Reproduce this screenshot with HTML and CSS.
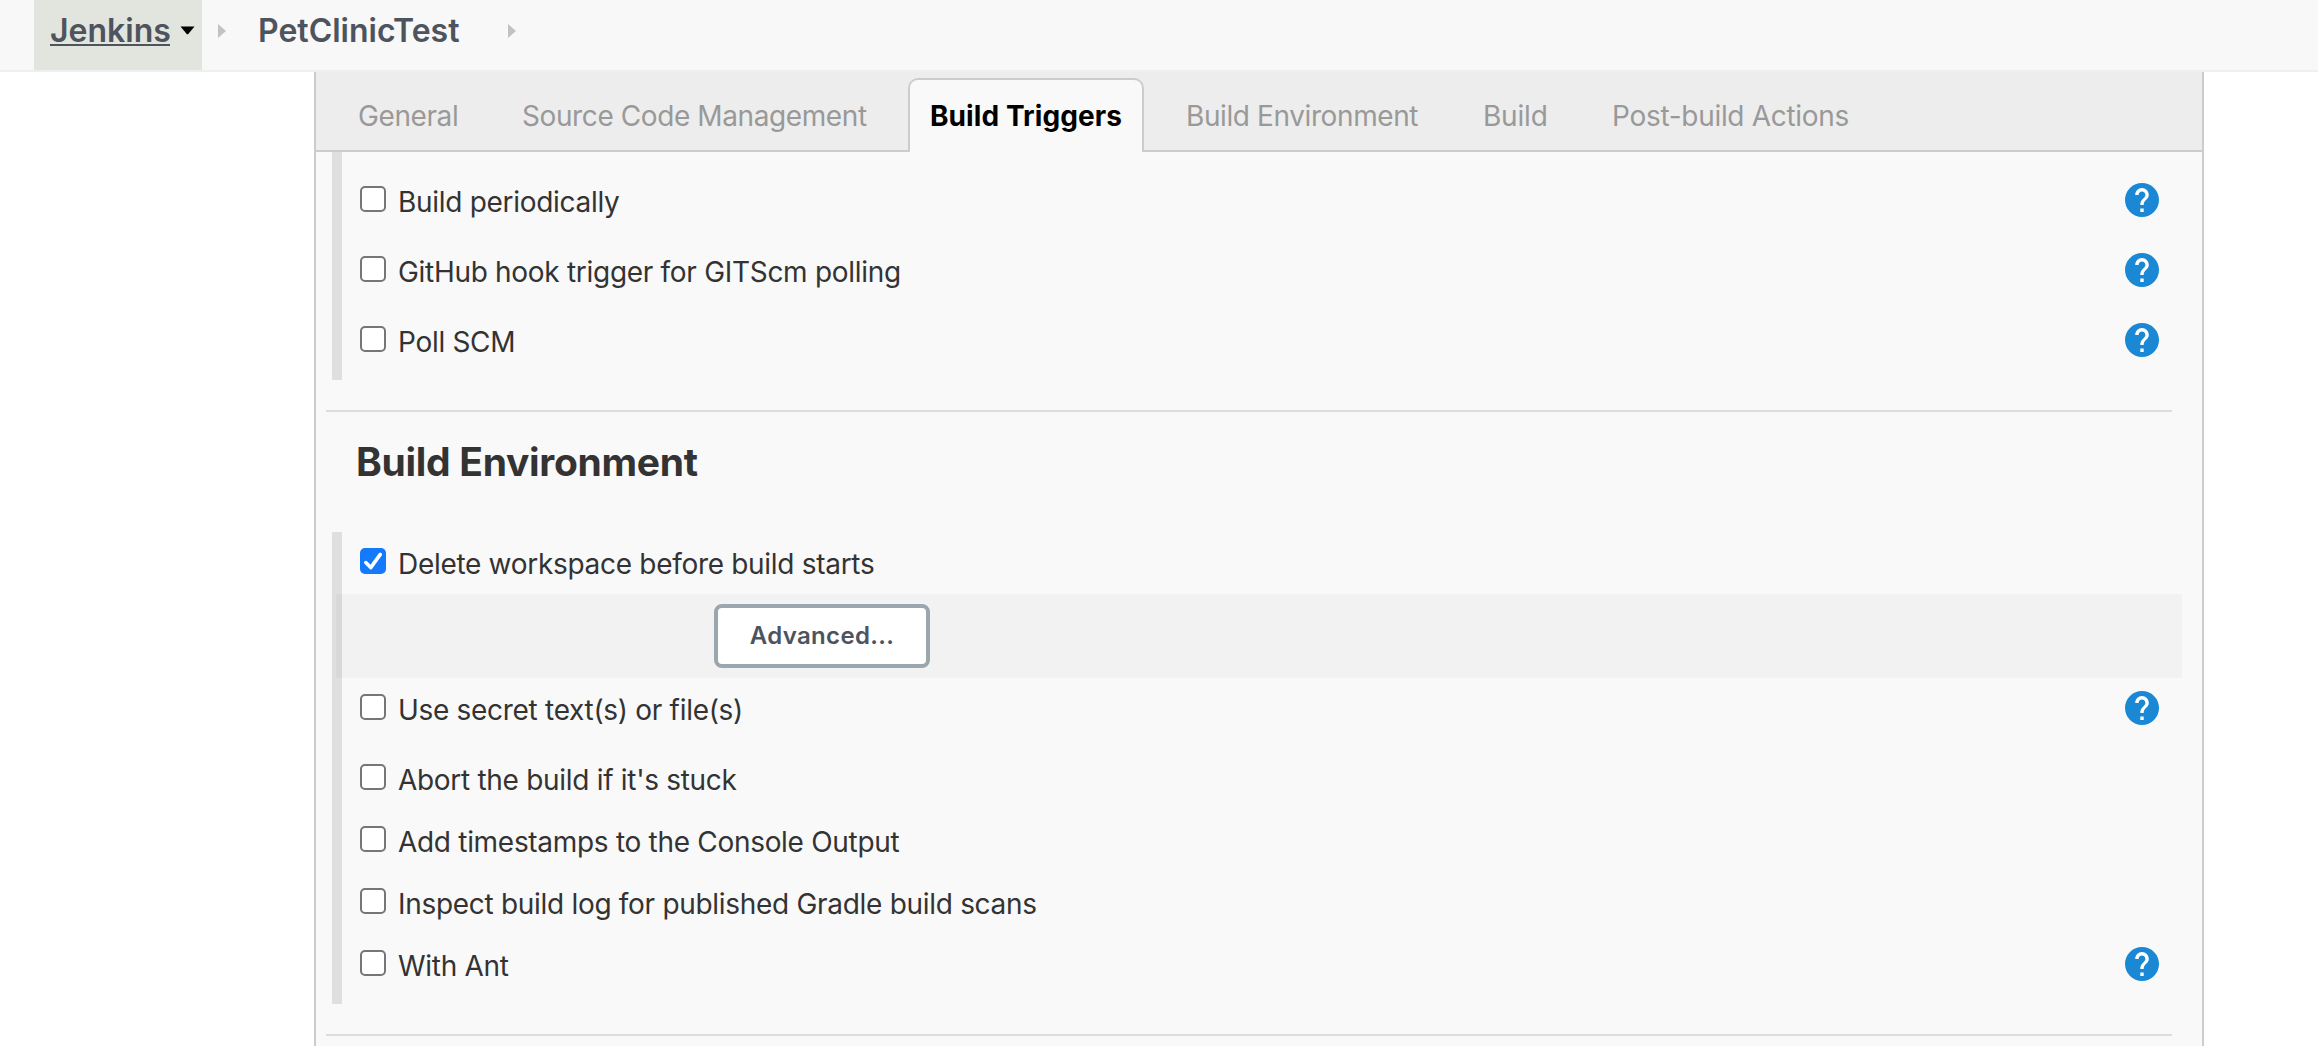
FILE: index.html
```html
<!DOCTYPE html>
<html lang="en">
<head>
<meta charset="utf-8">
<title>PetClinicTest Config [Jenkins]</title>
<link rel="stylesheet" href="styles.css">
</head>
<body>
<svg width="0" height="0" class="defs" aria-hidden="true">
  <symbol id="help" viewBox="2 2 20 20">
    <circle cx="12" cy="12" r="10" fill="#1a88d4"/>
    <path fill="#fff" d="M13 19h-2v-2h2v2zm2.07-7.75l-.9.92C13.45 12.9 13 13.5 13 15h-2v-.5c0-1.1.45-2.1 1.17-2.83l1.24-1.26c.37-.36.59-.86.59-1.41 0-1.1-.9-2-2-2s-2 .9-2 2H8c0-2.21 1.79-4 4-4s4 1.79 4 4c0 .88-.36 1.68-.93 2.25z"/>
  </symbol>
</svg>

<nav class="breadcrumbs">
  <div class="crumb crumb-active">
    <a class="crumb-link" href="#">Jenkins</a>
    <svg class="caret" viewBox="0 0 15 9"><path d="M0.5 0.5h14L8.5 7.8q-1 1.1-2 0z"/></svg>
  </div>
  <svg class="sep" viewBox="0 0 8 14"><path d="M0 0l8 7-8 7z"/></svg>
  <a class="crumb-project" href="#">PetClinicTest</a>
  <svg class="sep" viewBox="0 0 8 14"><path d="M0 0l8 7-8 7z"/></svg>
</nav>

<main class="config">
  <div class="tabs">
    <div class="tab tab-general">General</div>
    <div class="tab tab-scm">Source Code Management</div>
    <div class="tab tab-triggers active">Build Triggers</div>
    <div class="tab tab-env">Build Environment</div>
    <div class="tab tab-build">Build</div>
    <div class="tab tab-post">Post-build Actions</div>
  </div>

  <section class="group group-first">
    <div class="row tall"><input class="check" type="checkbox" id="c1"><label for="c1">Build periodically</label><svg class="help"><use href="#help"/></svg></div>
    <div class="row tall"><input class="check" type="checkbox" id="c2"><label for="c2">GitHub hook trigger for GITScm polling</label><svg class="help"><use href="#help"/></svg></div>
    <div class="row tall"><input class="check" type="checkbox" id="c3"><label for="c3">Poll SCM</label><svg class="help"><use href="#help"/></svg></div>
  </section>

  <div class="rule"></div>
  <h2 class="heading">Build Environment</h2>

  <section class="group">
    <div class="row"><span class="checked"><svg viewBox="0 0 26 26"><path d="M5.8 14.6l4.9 5L20.3 6.4" fill="none" stroke="#fff" stroke-width="3.6" stroke-linecap="round" stroke-linejoin="round"/></svg></span><label>Delete workspace before build starts</label></div>
    <div class="nested"><button class="button" type="button">Advanced...</button></div>
    <div class="row tall"><input class="check" type="checkbox" id="c5"><label for="c5">Use secret text(s) or file(s)</label><svg class="help"><use href="#help"/></svg></div>
    <div class="row"><input class="check" type="checkbox" id="c6"><label for="c6">Abort the build if it's stuck</label></div>
    <div class="row"><input class="check" type="checkbox" id="c7"><label for="c7">Add timestamps to the Console Output</label></div>
    <div class="row"><input class="check" type="checkbox" id="c8"><label for="c8">Inspect build log for published Gradle build scans</label></div>
    <div class="row tall"><input class="check" type="checkbox" id="c9"><label for="c9">With Ant</label><svg class="help"><use href="#help"/></svg></div>
  </section>

  <div class="rule"></div>
</main>
</body>
</html>
```
FILE: styles.css
```css
* { box-sizing: border-box; }

body {
  margin: 0;
  height: 1046px;
  overflow: hidden;
  display: flex;
  flex-direction: column;
  background: #fff;
  color: #333;
  font: 28px/36px Inter, "Liberation Sans", sans-serif;
  letter-spacing: -0.3px;
}

.defs { position: absolute; }

/* breadcrumb bar */
.breadcrumbs {
  flex: none;
  display: flex;
  height: 72px;
  padding-left: 34px;
  background: #f8f8f8;
  border-bottom: 2px solid #ecf0f1;
  font-size: 32px;
  font-weight: 600;
  line-height: 62px;
  letter-spacing: 0;
}
.breadcrumbs a { color: #4d545d; text-decoration: none; }
.crumb { display: flex; width: 168px; padding-left: 16px; }
.crumb-active { background: #e2e5de; }
.breadcrumbs .crumb-link {
  height: 46px;
  width: 120px;
  border-bottom: 2px solid #4d545d;
}
.caret { width: 15px; height: 9px; margin: 26px 0 0 10px; }
.sep { width: 8px; height: 14px; margin: 24px 0 0 16px; fill: #c2c2c2; }
.crumb-project { width: 250px; padding-left: 32px; margin-right: 16px; }

/* configuration panel */
.config {
  flex: 1;
  width: 1890px;
  margin-left: 314px;
  background: #f9f9f9;
  border: solid #ccc;
  border-width: 0 2px;
}

.tabs {
  display: flex;
  height: 80px;
  padding: 6px 0 0 20px;
  background: #ededed;
  border-bottom: 2px solid #ccc;
  color: #999;
  line-height: 72px;
  letter-spacing: -0.4px;
  white-space: nowrap;
}
.tab {
  height: 74px;
  margin-right: 20px;
  padding-left: 20px;
  border: 2px solid transparent;
  border-bottom: 0;
}
.tab-general { width: 144px; }
.tab-scm { width: 388px; }
.tab-triggers { width: 236px; }
.tab-env { width: 277px; }
.tab-build { width: 108px; letter-spacing: -0.2px; }
.tab-post { padding-left: 21px; letter-spacing: -0.3px; }
.tab.active {
  background: #f9f9f9;
  border-color: #ccc;
  border-radius: 10px 10px 0 0;
  color: #000;
  font-weight: 700;
  letter-spacing: 0.08px;
}

.group {
  margin: 0 20px 0 16px;
  border-left: 10px solid #dfdfdf;
}
.group-first { padding-top: 18px; }

.row {
  display: flex;
  align-items: flex-start;
  height: 62px;
  padding: 0 23px 0 18px;
}
.row.tall { height: 70px; }
.row label { margin: 14px 0 0 12px; }

.check, .checked {
  flex: none;
  width: 26px;
  height: 26px;
  margin: 16px 0 0;
  border-radius: 5px;
}
.check {
  appearance: none;
  background: #fff;
  border: 2px solid #767676;
}
.checked { background: #1479fb; }
.checked svg { display: block; width: 26px; height: 26px; }
.help { width: 34px; height: 34px; margin: 13px 0 0 auto; }

.rule {
  height: 2px;
  margin: 30px 30px 0 10px;
  background: #ddd;
}

.heading {
  margin: 22px 0 42px 40px;
  font-size: 39px;
  font-weight: 700;
  line-height: 56px;
}

.nested {
  display: flex;
  height: 84px;
  margin-left: -6px;
  padding: 10px 0 0 378px;
  background: rgba(0, 0, 0, 0.028);
}
.button {
  width: 216px;
  height: 64px;
  padding: 0;
  background: #fff;
  border: 4px solid #9ba7af;
  border-radius: 8px;
  color: #4d545d;
  font: 600 24px/56px Inter, "Liberation Sans", sans-serif;
  letter-spacing: 0.35px;
}
```
